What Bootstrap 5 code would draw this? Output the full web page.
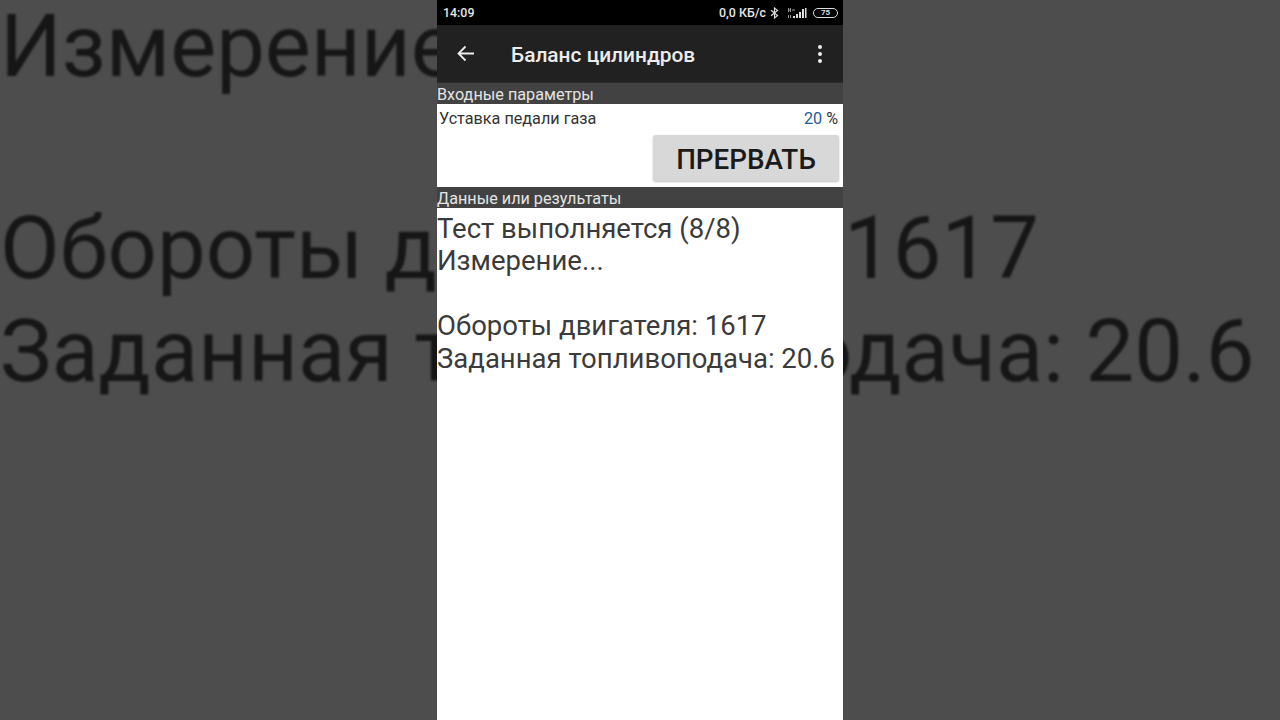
<!DOCTYPE html>
<html lang="ru">
<head>
<meta charset="utf-8">
<title>Баланс цилиндров</title>
<link href="https://cdn.jsdelivr.net/npm/bootstrap@5.3.0/dist/css/bootstrap.min.css" rel="stylesheet">
<style>
html,body{height:720px;overflow:hidden}
body{background:#4d4d4d;font-family:Roboto,"Liberation Sans",sans-serif;position:relative}
.backdrop{position:absolute;left:0;top:0;width:1280px;height:720px;overflow:hidden;filter:blur(1.2px);color:#161616;font-size:86.7px;line-height:102px;white-space:nowrap}
.backdrop div{position:absolute;left:0}
.bl1{top:-4px}.bl2{top:198px}.bl3{top:301px}
.phone{position:relative;width:406px;height:720px;background:#fff;margin:0 auto}
.statusline{height:25px;background:#000;color:#e6e6e6;font-size:12.4px;font-weight:500;padding:1px 5px 0 6px}
.toolline{height:58px;background:#212121;color:#ececec;border-bottom:1px solid #2b2b2b}
.backbtn{width:58px;padding-left:19px}
.screen-title{font-size:20.9px;font-weight:500;margin-left:16px;padding-top:4px}
.dots{width:46px;padding-left:20px}
.sect{background:#424242;color:#e4e4e4;font-size:16.2px;line-height:21px;height:21px;padding-top:1px}
.sect2{margin-top:1px}
.pedal{font-size:16.2px;line-height:20px;color:#333;padding:5px 5px 0 2px;height:31px}
.pedal b{font-weight:400;color:#1c5a9e;margin-right:4px}
.stopbtn{background:#d8d8d8;color:#1a1a1a;font-size:27.8px;font-weight:500;line-height:30px;width:186px;height:46px;border:0;border-radius:3px;box-shadow:0 1px 2px rgba(0,0,0,.25);padding:4px 0 0;margin:0 4px 5px 0}
.stopbtn:hover{background:#d8d8d8;color:#1a1a1a}
.output{font-size:27.5px;line-height:32.4px;color:#3b3b3b;white-space:nowrap;padding-top:5px}
.batt{font-size:8px;font-weight:700;line-height:8px;border:1px solid #ddd;border-radius:5px;width:25px;height:10px;text-align:center;color:#ddd;margin-left:6px}
</style>
</head>
<body>
<div class="backdrop" aria-hidden="true">
<div class="bl1">Измерение...</div>
<div class="bl2">Обороты двигателя: 1617</div>
<div class="bl3">Заданная топливоподача: 20.6</div>
</div>
<main class="phone d-flex flex-column">
<div class="statusline d-flex align-items-center justify-content-between">
<span>14:09</span>
<span class="d-flex align-items-center">0,0 КБ/с
<svg class="ms-1" width="9" height="12" viewBox="0 0 9 12" fill="none" stroke="#ddd" stroke-width="1.2"><path d="M1 3.2 7.5 8.6 4.5 11V1L7.5 3.4 1 8.8"/></svg>
<svg class="ms-2" width="20" height="12" viewBox="0 0 20 12" fill="#ddd"><path d="M1 1h1v1.5h1V1h1v4H3V3.5H2V5H1zM5 2.5h3v1H5zM1 8h1v3H1zM3 8h1v3H3z" opacity=".7"/><rect x="6" y="9" width="2" height="2"/><rect x="9" y="7" width="2" height="4"/><rect x="12" y="5" width="2" height="6"/><rect x="15" y="2" width="2" height="9"/><rect x="18" y="1" width="1.5" height="10"/></svg>
<span class="batt">75</span></span>
</div>
<div class="toolline d-flex align-items-center">
<div class="backbtn d-flex"><svg width="20" height="20" viewBox="0 0 20 20" fill="none" stroke="#ececec" stroke-width="1.8"><path d="M18 9.5H2.5M9.5 2.5 2.5 9.5l7 7"/></svg></div>
<div class="screen-title flex-grow-1">Баланс цилиндров</div>
<div class="dots d-flex"><svg width="6" height="20" viewBox="0 0 6 20" fill="#ececec"><circle cx="3" cy="3" r="2"/><circle cx="3" cy="10" r="2"/><circle cx="3" cy="17" r="2"/></svg></div>
</div>
<div class="sect">Входные параметры</div>
<div class="pedal d-flex justify-content-between"><span>Уставка педали газа</span><span><b>20</b>%</span></div>
<div class="d-flex justify-content-end"><button type="button" class="btn stopbtn">ПРЕРВАТЬ</button></div>
<div class="sect sect2">Данные или результаты</div>
<div class="output">Тест выполняется (8/8)<br>Измерение...<br><br>Обороты двигателя: 1617<br>Заданная топливоподача: 20.6</div>
</main>
<script src="https://cdn.jsdelivr.net/npm/bootstrap@5.3.0/dist/js/bootstrap.bundle.min.js"></script>
</body>
</html>
